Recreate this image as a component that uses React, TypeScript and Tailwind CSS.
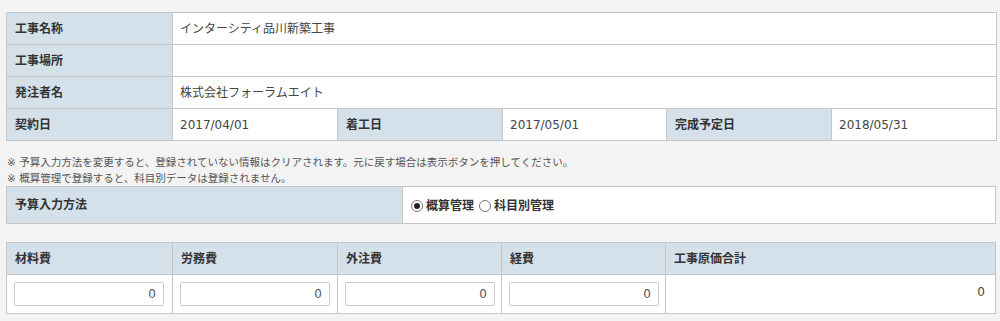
import React from "react";

const font = { fontFamily: '"DejaVu Sans", "Noto Sans CJK JP", "Noto Sans", sans-serif' };

const th = "bg-[#d4e0ea] border border-[#c6c6c6] px-[8px] text-left font-bold text-[12px] text-[#333] align-middle";
const td = "bg-white border border-[#c6c6c6] px-[7px] text-[12px] text-[#444] align-middle";

function Radio({ checked }: { checked: boolean }) {
  return (
    <span className="inline-flex items-center justify-center w-[12px] h-[12px] rounded-full border border-[#777] bg-white mr-[3px]">
      {checked && <span className="w-[6px] h-[6px] rounded-full bg-[#222]" />}
    </span>
  );
}

function NumInput() {
  return (
    <div className="w-[150px] h-[24px] border border-[#ccc] rounded-[2px] bg-white flex items-center justify-end pr-[7px] text-[12px] text-[#555]">
      0
    </div>
  );
}

export default function App() {
  return (
    <div className="w-[1000px] h-[321px] bg-[#f3f3f3] pt-[12px] px-[6px]" style={font}>
      <table className="w-[990px] table-fixed border-collapse">
        <colgroup>
          <col className="w-[166px]" />
          <col className="w-[165px]" />
          <col className="w-[165px]" />
          <col className="w-[164px]" />
          <col className="w-[165px]" />
          <col className="w-[165px]" />
        </colgroup>
        <tbody>
          <tr className="h-[32px]">
            <th className={th}>工事名称</th>
            <td className={td} colSpan={5}>インターシティ品川新築工事</td>
          </tr>
          <tr className="h-[32px]">
            <th className={th}>工事場所</th>
            <td className={td} colSpan={5}></td>
          </tr>
          <tr className="h-[32px]">
            <th className={th}>発注者名</th>
            <td className={td} colSpan={5}>株式会社フォーラムエイト</td>
          </tr>
          <tr className="h-[32px]">
            <th className={th}>契約日</th>
            <td className={td}>2017/04/01</td>
            <th className={th}>着工日</th>
            <td className={td}>2017/05/01</td>
            <th className={th}>完成予定日</th>
            <td className={td}>2018/05/31</td>
          </tr>
        </tbody>
      </table>

      <div className="mt-[13px] text-[10.5px] leading-[16px] text-[#555] pl-[1px]">
        <p className="h-[16px]">※ 予算入力方法を変更すると、登録されていない情報はクリアされます。元に戻す場合は表示ボタンを押してください。</p>
        <p className="h-[16px]">※ 概算管理で登録すると、科目別データは登録されません。</p>
      </div>

      <table className="w-[990px] table-fixed border-collapse">
        <colgroup>
          <col className="w-[396px]" />
          <col />
        </colgroup>
        <tbody>
          <tr className="h-[37px]">
            <th className={th}>予算入力方法</th>
            <td className={td}>
              <span className="inline-flex items-center font-bold text-[#333] pl-[1px]">
                <Radio checked />
                <span className="mr-[5px]">概算管理</span>
                <Radio checked={false} />
                <span>科目別管理</span>
              </span>
            </td>
          </tr>
        </tbody>
      </table>

      <table className="w-[990px] table-fixed border-collapse mt-[18px]">
        <colgroup>
          <col className="w-[166px]" />
          <col className="w-[165px]" />
          <col className="w-[164px]" />
          <col className="w-[164px]" />
          <col />
        </colgroup>
        <tbody>
          <tr className="h-[32px]">
            <th className={th}>材料費</th>
            <th className={th}>労務費</th>
            <th className={th}>外注費</th>
            <th className={th}>経費</th>
            <th className={th}>工事原価合計</th>
          </tr>
          <tr className="h-[39px]">
            <td className={td}><NumInput /></td>
            <td className={td}><NumInput /></td>
            <td className={td}><NumInput /></td>
            <td className={td}><NumInput /></td>
            <td className={td + " text-right align-top pt-[8px] pr-[10px]"}>0</td>
          </tr>
        </tbody>
      </table>
    </div>
  );
}
